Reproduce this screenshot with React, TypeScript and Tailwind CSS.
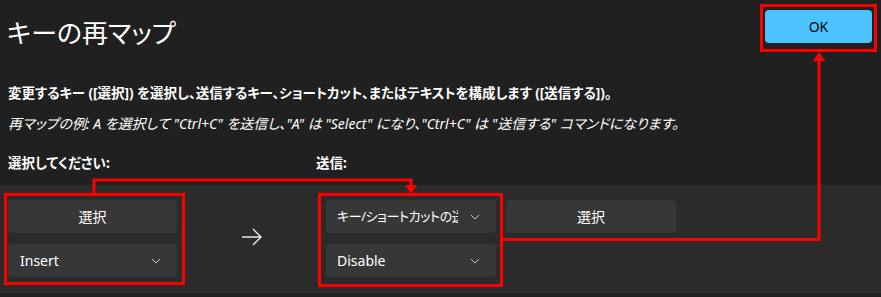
import React from "react";

const Chevron = () => (
  <svg width="10" height="6" viewBox="0 0 10 6" className="shrink-0">
    <path d="M1 1 L5 5 L9 1" fill="none" stroke="#c8c8c8" strokeWidth="1" />
  </svg>
);

export default function App() {
  return (
    <div
      className="relative w-[881px] h-[297px] overflow-hidden bg-[#202020] text-white flex flex-col [font-feature-settings:'palt']"
      style={{ fontFamily: '"Noto Sans", "Noto Sans CJK JP", sans-serif' }}
    >
      <div className="flex justify-between items-start pl-[7px] pr-[4px] pt-[4px]">
        <h1 className="text-[26px] leading-[34px] mt-[12px] font-normal">キーの再マップ</h1>
        <div className="w-[117px] h-[48px] border-[3px] border-[#ff0000] pt-[3px] pl-[2px]">
          <button className="w-[107px] h-[33px] rounded-[4px] bg-[#4cc2ff] text-black text-[14px] flex items-center justify-center">
            OK
          </button>
        </div>
      </div>

      <p className="mt-[32px] pl-[8px] text-[13.5px] leading-[18px] font-bold">
        変更するキー ([選択]) を選択し、送信するキー、ショートカット、またはテキストを構成します ([送信する])。
      </p>
      <p className="mt-[13px] pl-[8px] text-[14px] leading-[18px] italic">
        再マップの例: A を選択して "Ctrl+C" を送信し、"A" は "Select" になり、"Ctrl+C" は "送信する" コマンドになります。
      </p>

      <div className="flex mt-[21px] text-[13.5px] leading-[18px] font-bold">
        <div className="pl-[8px] w-[316px]">選択してください:</div>
        <div>送信:</div>
      </div>

      <div className="mt-[13px] h-[108px] bg-[#2b2b2b] flex items-start">
        <div className="ml-[4px] mt-[8px] w-[181px] h-[92px] border-[3px] border-[#ff0000] pt-[4px] pl-[1px] flex flex-col gap-[11px]">
          <button className="w-[169px] h-[33px] rounded-[4px] bg-[#373737] text-[14px] flex items-center justify-center">
            選択
          </button>
          <div className="w-[169px] h-[33px] rounded-[4px] bg-[#373737] text-[14px] flex items-center justify-between pl-[12px] pr-[16px]">
            <span>Insert</span>
            <Chevron />
          </div>
        </div>

        <div className="w-[133px] h-[108px] flex items-center justify-center pb-[4px]">
          <svg width="22" height="18" viewBox="0 0 22 18">
            <path d="M1 9 H20 M12 1 L20 9 L12 17" fill="none" stroke="#e8e8e8" strokeWidth="1.4" />
          </svg>
        </div>

        <div className="mt-[8px] w-[185px] h-[94px] border-[3px] border-[#ff0000] pt-[4px] pl-[5px] flex flex-col gap-[11px]">
          <div className="w-[170px] h-[33px] rounded-[4px] bg-[#373737] text-[13px] flex items-center pl-[11px] pr-[16px]">
            <span className="w-[121px] overflow-hidden whitespace-nowrap tracking-[-0.4px]">キー/ショートカットの送信</span>
            <span className="ml-auto"><Chevron /></span>
          </div>
          <div className="w-[170px] h-[33px] rounded-[4px] bg-[#373737] text-[14px] flex items-center justify-between pl-[11px] pr-[16px]">
            <span>Disable</span>
            <Chevron />
          </div>
        </div>

        <button className="ml-[3px] mt-[15px] w-[170px] h-[33px] rounded-[4px] bg-[#373737] text-[14px] flex items-center justify-center">
          選択
        </button>
      </div>

      <svg className="absolute inset-0 pointer-events-none" width="881" height="297">
        <polyline points="94,193 94,180 411,180 411,186" fill="none" stroke="#ff0000" strokeWidth="3" />
        <polygon points="405,185 417,185 411,194" fill="#ff0000" />
        <polyline points="503,239.5 819,239.5 819,60" fill="none" stroke="#ff0000" strokeWidth="3" />
        <polygon points="813,61 825,61 819,52" fill="#ff0000" />
      </svg>
    </div>
  );
}
